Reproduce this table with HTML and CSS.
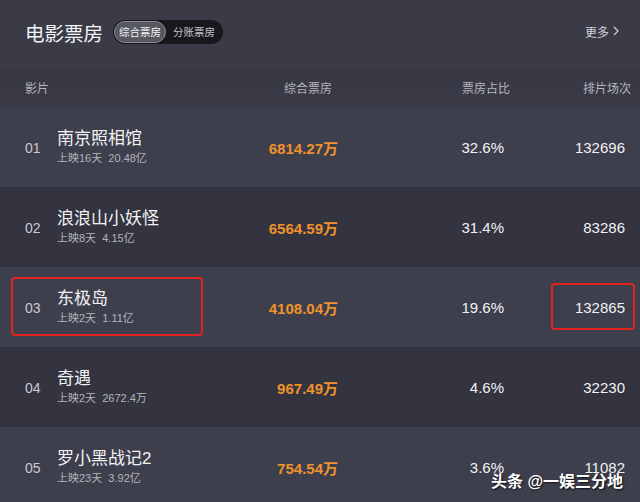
FILE: index.html
```html
<!DOCTYPE html>
<html lang="zh">

<head>
    <meta charset="UTF-8">
    <meta name="viewport" content="width=device-width, initial-scale=1.0">
    <title>电影票房</title>
    <link rel="stylesheet" href="styles.css">
</head>

<body>
    <div class="board">
        <div class="top">
            <div class="title">电影票房</div>
            <div class="toggle">
                <span class="seg active">综合票房</span>
                <span class="seg">分账票房</span>
            </div>
            <a class="more">更多
                <svg width="8" height="10" viewBox="0 0 8 10"><path d="M2 1l4 4-4 4" fill="none" stroke="#d2d2d8" stroke-width="1.2"/></svg>
            </a>
        </div>

        <div class="head">
            <span>影片</span>
            <span></span>
            <span class="r gross-h">综合票房</span>
            <span class="r">票房占比</span>
            <span class="r">排片场次</span>
        </div>

        <div class="row light">
            <span class="rank">01</span>
            <div class="film">
                <div class="name">南京照相馆</div>
                <div class="sub">上映16天&nbsp;&nbsp;20.48亿</div>
            </div>
            <span class="r gross">6814.27万</span>
            <span class="r num">32.6%</span>
            <span class="r num">132696</span>
        </div>

        <div class="row dark">
            <span class="rank">02</span>
            <div class="film">
                <div class="name">浪浪山小妖怪</div>
                <div class="sub">上映8天&nbsp;&nbsp;4.15亿</div>
            </div>
            <span class="r gross">6564.59万</span>
            <span class="r num">31.4%</span>
            <span class="r num">83286</span>
        </div>

        <div class="row light">
            <span class="rank">03</span>
            <div class="film">
                <div class="name">东极岛</div>
                <div class="sub">上映2天&nbsp;&nbsp;1.11亿</div>
            </div>
            <span class="r gross">4108.04万</span>
            <span class="r num">19.6%</span>
            <span class="r num">132865</span>
            <div class="mark mark-film"></div>
            <div class="mark mark-count"></div>
        </div>

        <div class="row dark">
            <span class="rank">04</span>
            <div class="film">
                <div class="name">奇遇</div>
                <div class="sub">上映2天&nbsp;&nbsp;2672.4万</div>
            </div>
            <span class="r gross">967.49万</span>
            <span class="r num">4.6%</span>
            <span class="r num">32230</span>
        </div>

        <div class="row light">
            <span class="rank">05</span>
            <div class="film">
                <div class="name">罗小黑战记2</div>
                <div class="sub">上映23天&nbsp;&nbsp;3.92亿</div>
            </div>
            <span class="r gross">754.54万</span>
            <span class="r num">3.6%</span>
            <span class="r num">11082</span>
        </div>

        <div class="watermark">头条 @一娱三分地</div>
    </div>
</body>

</html>
```

FILE: styles.css
```css
body {
    margin: 0;
    padding: 0;
    background-color: #3a3b47;
    font-family: "Liberation Sans", "Noto Sans CJK SC", sans-serif;
    color: #f0f0f2;
}

.board {
    position: relative;
    width: 640px;
    height: 502px;
    overflow: hidden;
    background-color: #3a3b47;
}

.top {
    display: flex;
    align-items: center;
    height: 68px;
    padding: 0 20px 0 25px;
    box-sizing: border-box;
}

.title {
    font-size: 19.5px;
    color: #f4f4f6;
    margin-right: 10px;
    padding-bottom: 4px;
}

.toggle {
    display: flex;
    align-items: center;
    height: 24px;
    padding: 1px;
    box-sizing: border-box;
    border-radius: 12px;
    background-color: #17171c;
    margin-bottom: 4px;
}

.seg {
    font-size: 10.5px;
    color: #c4c4ca;
    padding: 0 7px;
    line-height: 22px;
}

.seg.active {
    background-color: #56575f;
    border: 1px solid #8a8b92;
    border-radius: 11px;
    line-height: 20px;
    color: #f4f4f6;
    padding: 0 4px;
}

.more {
    margin-left: auto;
    display: flex;
    align-items: center;
    gap: 3px;
    font-size: 12px;
    color: #d2d2d8;
    margin-bottom: 6px;
}

.head {
    display: grid;
    grid-template-columns: 32px 1fr 100px 172px 121px;
    align-items: center;
    height: 39px;
    padding: 0 9px 0 25px;
    font-size: 12px;
    color: #b4b5bc;
    background: linear-gradient(#363743, #3a3b47);
}

.gross-h {
    padding-right: 6px;
}

.r {
    text-align: right;
    white-space: nowrap;
}

.row {
    position: relative;
    display: grid;
    grid-template-columns: 32px 1fr 100px 166px 121px;
    align-items: center;
    height: 80px;
    padding: 0 15px 0 25px;
}

.light {
    background-color: #3e3f4c;
}

.dark {
    background-color: #33343f;
}

.rank {
    font-size: 14px;
    color: #c9cad0;
    padding-top: 2px;
}

.film {
    display: flex;
    flex-direction: column;
    gap: 1px;
}

.name {
    font-size: 17px;
    line-height: 22px;
    color: #f2f2f4;
}

.sub {
    font-size: 11px;
    line-height: 15px;
    color: #b3b4ba;
}

.gross {
    font-size: 15px;
    color: #f0922c;
    font-weight: bold;
}

.num {
    font-size: 15px;
    color: #f2f2f4;
}

.mark {
    position: absolute;
    border: 2px solid #e0231f;
    border-radius: 4px;
}

.mark-film {
    left: 11px;
    top: 10px;
    width: 188px;
    height: 55px;
}

.mark-count {
    left: 551px;
    top: 16px;
    width: 80px;
    height: 43px;
}

.watermark {
    position: absolute;
    left: 491px;
    top: 468px;
    font-size: 16px;
    font-weight: bold;
    color: #ffffff;
    text-shadow: 1px 1px 2px rgba(0, 0, 0, 0.8);
    white-space: nowrap;
}
```
